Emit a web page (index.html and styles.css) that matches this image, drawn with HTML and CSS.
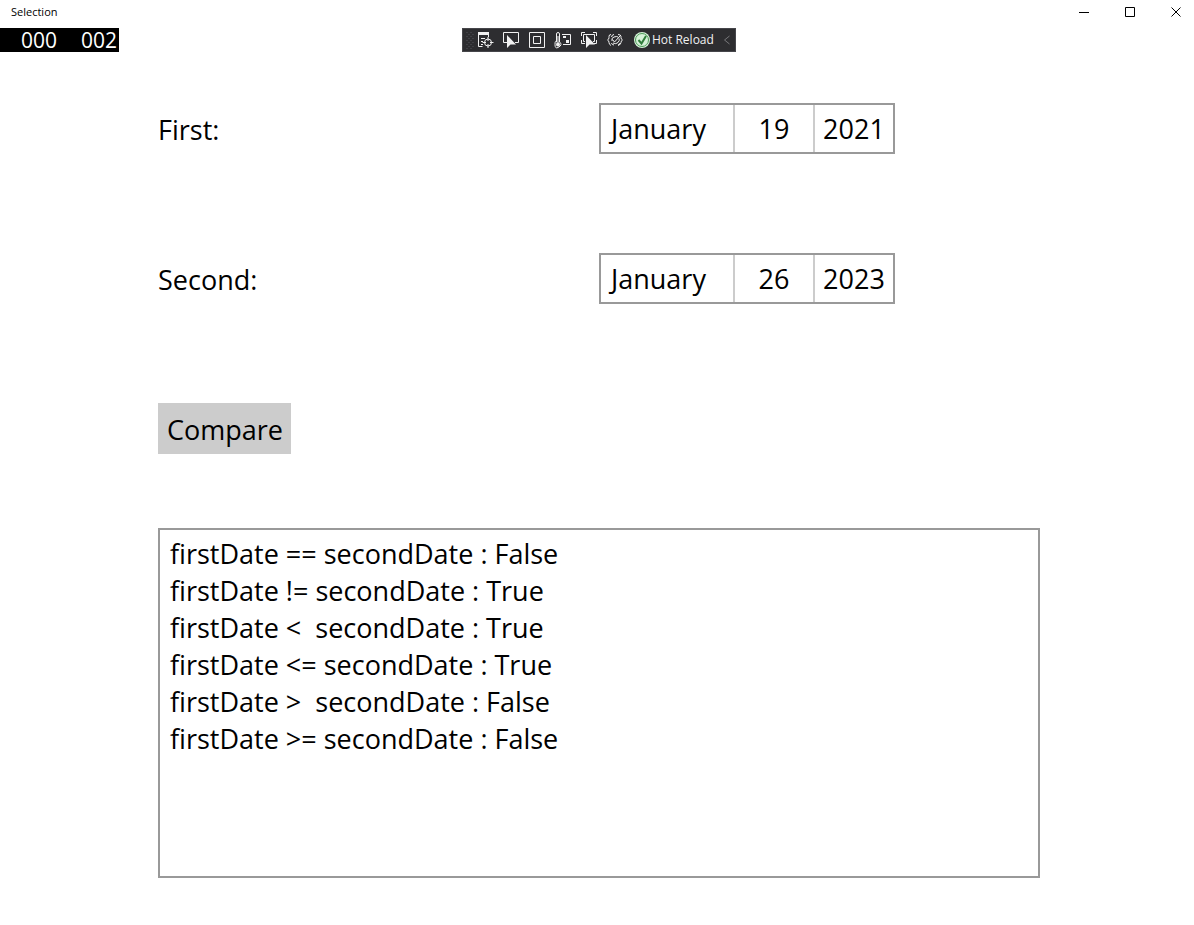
FILE: index.html
```html
<!DOCTYPE html>
<html lang="en">
<head>
<meta charset="utf-8">
<title>Selection</title>
<link rel="stylesheet" href="styles.css">
</head>
<body>
<header class="titlebar">
  <span class="title">Selection</span>
  <div class="window-controls">
    <button type="button" aria-label="Minimize"><svg width="11" height="11"><path d="M0 5.5h10"/></svg></button>
    <button type="button" aria-label="Maximize"><svg width="11" height="11"><path d="M.5.5h9v9H.5z"/></svg></button>
    <button type="button" aria-label="Close"><svg width="11" height="11"><path d="M.5.5l9 9M9.5.5l-9 9"/></svg></button>
  </div>
</header>
<div class="debug-row">
  <div class="counters"><span>000</span><span>002</span></div>
  <div class="toolbar" role="toolbar" aria-label="Debug tools">
    <svg class="grip" width="8" height="18" aria-hidden="true"><path d="M1 1v17M5 1v17"/><path d="M3 3v15M7 3v15"/></svg>
    <button type="button" class="tool" aria-label="Go to live visual tree"><svg width="18" height="18"><path class="solid" d="M2 1h11v3H2z"/><path d="M6.500 15.500h-4V3M12.500 3v3M5 7.500h4M5 10.500h2M5 13.500h2"/><circle cx="12" cy="11.500" r="3.500"/><path d="M12 6v4M12 13v4M6.500 11.500H10M14 11.500h3.500"/></svg></button>
    <button type="button" class="tool" aria-label="Select element"><svg width="18" height="18"><path d="M5 11.500H1.500v-10h15v10H13"/><path class="solid" d="M5 4v13l3.500-3.500H14z"/></svg></button>
    <button type="button" class="tool" aria-label="Display layout adorners"><svg width="18" height="18"><path d="M1.500 1.500h15v15h-15zM5.500 5.500h7v7h-7z"/></svg></button>
    <button type="button" class="tool" aria-label="Track focused element"><svg width="18" height="18"><path d="M2.500 11V3q0-1.500 1.500-1.500T5.500 3v8q1.500 1 1.500 2.500T4 16.500 1 13.500 2.500 11zM8 3.500h8.500v10H9"/><path class="solid" d="M3.500 5h1v8h-1zM9 5h3v2H9zM12 9h3v3h-3z"/><circle class="solid" cx="4" cy="13.500" r="2"/></svg></button>
    <button type="button" class="tool" aria-label="Show selection bounds"><svg width="18" height="18"><path d="M1.500 5V1.500H5M13 1.500h3.500V5M16.500 9v3.500H14M5 12.500H1.500V9M5 10.500H3.500v-7h11v7H13"/><path class="solid" d="M6 4v13l3.500-3.500H15z"/></svg></button>
    <button type="button" class="tool" aria-label="Binding failures"><svg width="18" height="18"><path d="M5 3.500q-2 0-2 2v1q0 2-1.500 2.500Q3 9.500 3 11.500t2 3M8 3.500q-2 0-2.500 2.500M12 3.500q3 0 3 2v1q0 2 1.500 2.500-1.500.5-1.500 2.500t-3 3M5.500 12q.5 2 2.500 2M12 14q2-.5 2-2M6 10q-1-3 2-4t4 0M7 12q3 1.500 5-.5t1-4"/><path d="M6.500 8.500l2 2.500L14 5"/></svg></button>
    <button type="button" class="reload"><svg width="16" height="16"><circle class="disc" cx="8" cy="8" r="8"/><circle class="ring" cx="8" cy="8" r="6.500"/><path class="check" d="M4.500 8l3 3.500 4.500-7.500"/></svg>Hot Reload</button>
    <button type="button" class="collapse" aria-label="Collapse toolbar"><svg width="8" height="10"><path d="M6.500 1L1.500 5l5 4"/></svg></button>
  </div>
</div>
<main class="page">
  <div class="field">
    <label for="first">First:</label>
    <button type="button" id="first" class="date-picker"><span>January</span><span>19</span><span>2021</span></button>
  </div>
  <div class="field">
    <label for="second">Second:</label>
    <button type="button" id="second" class="date-picker"><span>January</span><span>26</span><span>2023</span></button>
  </div>
  <div class="field">
    <button type="button" class="compare">Compare</button>
  </div>
  <textarea class="output" aria-label="Comparison results" readonly>firstDate == secondDate : False
firstDate != secondDate : True
firstDate &lt;  secondDate : True
firstDate &lt;= secondDate : True
firstDate &gt;  secondDate : False
firstDate &gt;= secondDate : False</textarea>
</main>
</body>
</html>
```
FILE: styles.css
```css
* { box-sizing: border-box; }
body {
  margin: 0;
  min-height: 100vh;
  display: flex;
  flex-direction: column;
  background: #fff;
  color: #000;
  font: 27px/37px "Segoe UI", "Open Sans", "Noto Sans", sans-serif;
}
button { border: 0; padding: 0; background: none; color: inherit; font: inherit; }
svg { display: block; fill: none; stroke: currentColor; }
.titlebar {
  display: flex;
  justify-content: space-between;
  height: 28px;
  padding-left: 11px;
  font-size: 11px;
  line-height: 24px;
}
.window-controls { display: flex; height: 24px; margin-right: -5px; }
.window-controls button { width: 46px; display: grid; place-items: center; }
.debug-row {
  display: grid;
  grid-template-columns: 1fr auto 1fr;
  height: 24px;
  padding-left: 4px;
}
.counters {
  justify-self: start;
  display: flex;
  gap: 24px;
  margin-left: -4px;
  padding: 0 2px 0 21px;
  background: #000;
  color: #fff;
  font-size: 21px;
  line-height: 24px;
}
.toolbar {
  display: flex;
  align-items: center;
  width: 274px;
  padding-left: 3px;
  border: 1px solid #46464a;
  background: #2d2d30;
  color: #f1f1f1;
  font-size: 12px;
  line-height: 22px;
}
.grip { stroke: #55555a; stroke-dasharray: 1 3; margin-right: -2px; }
.tool { width: 26px; height: 22px; display: grid; place-items: center; }
.solid { fill: currentColor; stroke: none; }
.reload { display: flex; align-items: center; gap: 2px; margin-left: 6px; white-space: nowrap; }
.disc { fill: #d5f2d8; stroke: none; }
.ring { stroke: #4f9a5a; }
.check { stroke: #2f7d3b; stroke-width: 2; }
.collapse { margin: 0 4px 0 auto; color: #77777a; }
.page {
  flex: 1;
  display: flex;
  flex-direction: column;
  padding: 1px 154px 47px 158px;
}
.field {
  display: grid;
  grid-template-columns: 1fr 1fr;
  align-items: center;
  justify-items: start;
  height: 150px;
}
.field label { padding-top: 2px; }
.date-picker {
  display: grid;
  grid-template-columns: 132px 80px 80px;
  border: 2px solid #999;
  text-align: center;
}
.date-picker span { padding: 5px 0; }
.date-picker span:first-child { padding-left: 10px; text-align: left; }
.date-picker span + span { border-left: 2px solid #ccc; }
.compare { padding: 8px 8px 6px 9px; background: #ccc; }
.output {
  flex: 1;
  display: block;
  width: 100%;
  margin-top: 25px;
  padding: 5px 10px;
  border: 2px solid #999;
  outline: 0;
  resize: none;
  color: inherit;
  font: inherit;
}
```
